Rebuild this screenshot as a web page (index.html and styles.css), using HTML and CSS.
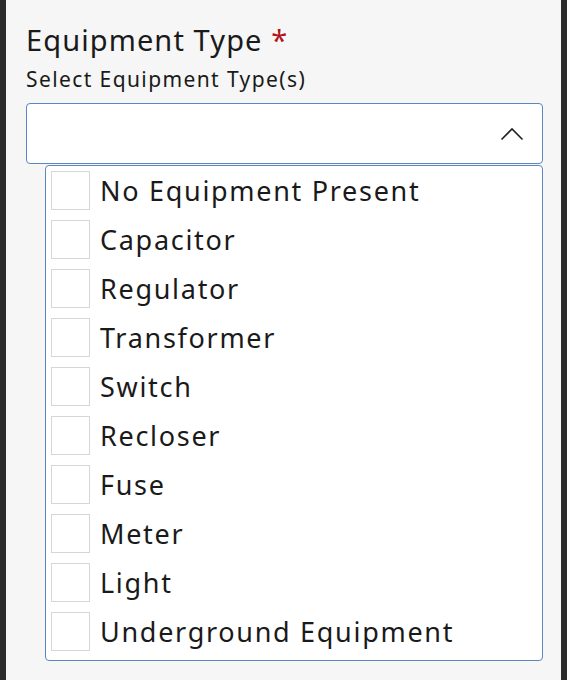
FILE: index.html
```html
<!DOCTYPE html>
<html lang="en">
<head>
    <meta charset="UTF-8">
    <title>Equipment Type</title>
    <link rel="stylesheet" href="styles.css">
</head>
<body>
<div class="frame">
    <div class="edge"></div>
    <div class="panel">
        <div class="field-title">Equipment Type <span class="req">*</span></div>
        <div class="field-hint">Select Equipment Type(s)</div>
        <div class="select-box">
            <svg class="chevron" width="24" height="14" viewBox="0 0 24 14">
                <polyline points="1.5,12.5 12,2 22.5,12.5" fill="none" stroke="#222" stroke-width="1.6"/>
            </svg>
        </div>
        <div class="option-list">
            <div class="option"><span class="box"></span>No Equipment Present</div>
            <div class="option"><span class="box"></span>Capacitor</div>
            <div class="option"><span class="box"></span>Regulator</div>
            <div class="option"><span class="box"></span>Transformer</div>
            <div class="option"><span class="box"></span>Switch</div>
            <div class="option"><span class="box"></span>Recloser</div>
            <div class="option"><span class="box"></span>Fuse</div>
            <div class="option"><span class="box"></span>Meter</div>
            <div class="option"><span class="box"></span>Light</div>
            <div class="option"><span class="box"></span>Underground Equipment</div>
        </div>
    </div>
    <div class="edge"></div>
</div>
</body>
</html>
```

FILE: styles.css
```css
body {
    margin: 0;
    font-family: "Noto Sans", sans-serif;
    background-color: #f6f6f6;
    color: #1a1a1a;
}
.frame {
    display: flex;
    height: 680px;
}
.edge {
    width: 6px;
    background-color: #2b2b2b;
}
.panel {
    flex: 1;
    padding: 22px 18px 0 20px;
}
.field-title {
    font-size: 29px;
    line-height: 36px;
    letter-spacing: 1.1px;
}
.req {
    color: #b3131b;
}
.field-hint {
    font-size: 21px;
    line-height: 26px;
    letter-spacing: 1.4px;
    margin-top: 8px;
}
.select-box {
    height: 59px;
    margin-top: 11px;
    background-color: #fff;
    border: 1px solid #5b86c4;
    border-radius: 4px;
    display: flex;
    align-items: center;
    justify-content: flex-end;
    padding-right: 18px;
}
.chevron {
    display: block;
}
.option-list {
    margin: 1px 0 0 19px;
    background-color: #fff;
    border: 1px solid #5b86c4;
    border-radius: 4px;
    padding-bottom: 4px;
}
.option {
    height: 49px;
    display: flex;
    align-items: center;
    font-size: 27px;
    letter-spacing: 1.7px;
    padding-left: 5px;
}
.box {
    width: 37px;
    height: 37px;
    border: 1px solid #d6d6d6;
    margin-right: 10px;
}
```
